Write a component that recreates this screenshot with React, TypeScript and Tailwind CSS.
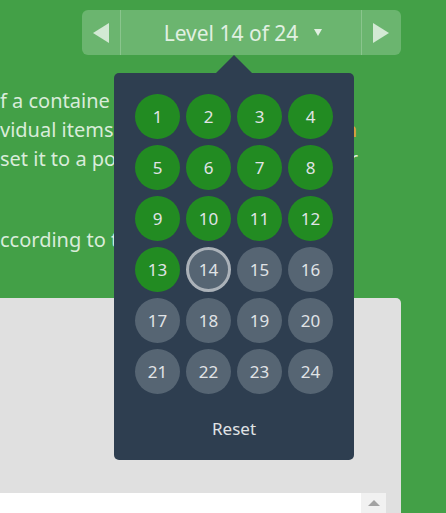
const LEVELS = Array.from({ length: 24 }, (_, i) => i + 1);
const CURRENT = 14;

function levelClass(level: number) {
  if (level < CURRENT) return "bg-[#228b22]";
  if (level === CURRENT) return "bg-[#566573] border-[3px] border-[#abb2b9]";
  return "bg-[#566573]";
}

function LevelMenu() {
  return (
    <div className="absolute top-[45px] left-8 z-10 flex w-60 flex-col items-center">
      <svg width="36" height="18" viewBox="0 0 36 18" aria-hidden="true">
        <path d="M0 18 18 0 36 18Z" fill="#2e3e50" />
      </svg>
      <div className="flex w-full flex-col items-center rounded-[5px] bg-[#2e3e50] pt-[21px] pb-4 text-[#e0e3e6]">
        <div className="grid grid-cols-4 gap-[6px]">
          {LEVELS.map((level) => (
            <button
              key={level}
              type="button"
              aria-current={level === CURRENT ? "step" : undefined}
              className={`flex size-[45px] items-center justify-center rounded-full text-[17px] leading-6 ${levelClass(level)}`}
            >
              {level}
            </button>
          ))}
        </div>
        <button type="button" className="mt-5 px-4 py-[3px] text-[17px] leading-6">
          Reset
        </button>
      </div>
    </div>
  );
}

function LevelBar() {
  return (
    <nav className="relative mr-[45px] ml-[82px] flex h-[45px] rounded-[6px] bg-[#6bb56f] text-[#e1f0e2]">
      <button type="button" aria-label="Previous level" className="flex w-[39px] items-center justify-end border-r border-[#8ac58d] pr-[11px]">
        <svg width="16" height="20" viewBox="0 0 16 20" aria-hidden="true">
          <path d="M0 10 16 0V20Z" fill="#d3e9d4" />
        </svg>
      </button>
      <button type="button" aria-expanded="true" className="flex flex-1 items-center justify-center gap-4 pl-1 text-[21px] leading-7 whitespace-nowrap">
        Level 14 of 24
        <svg width="8" height="7" viewBox="0 0 8 7" aria-hidden="true">
          <path d="M0 0H8L4 7Z" fill="#e1f0e2" />
        </svg>
      </button>
      <button type="button" aria-label="Next level" className="flex w-10 items-center border-l border-[#8ac58d] pl-[11px]">
        <svg width="16" height="20" viewBox="0 0 16 20" aria-hidden="true">
          <path d="M16 10 0 0V20Z" fill="#d3e9d4" />
        </svg>
      </button>
      <LevelMenu />
    </nav>
  );
}

export default function App() {
  return (
    <div className="flex h-screen flex-col overflow-hidden bg-[#43a047] pt-[10px] font-['Noto_Sans','Open_Sans',sans-serif]">
      <LevelBar />
      <div className="mt-[31px] mr-[88px] text-[20px] leading-[29px] whitespace-nowrap text-[#d9ecda]">
        <p>f a containe</p>
        <p className="flex justify-between">
          <span>vidual items</span>
          <code className="mr-px font-[inherit] text-[#e0a03c]">n</code>
        </p>
        <p className="flex justify-between">
          <span>set it to a po</span>
          <span>r</span>
        </p>
        <p className="mt-[52px]">ccording to t</p>
      </div>
      <section className="mt-[44px] mr-[45px] flex flex-1 flex-col rounded-tr-[5px] bg-[#e0e0e0] pt-[195px]">
        <div className="mr-[15px] flex flex-1 bg-white">
          <div className="flex-1" />
          <button type="button" aria-label="Scroll up" className="flex w-[25px] items-start justify-center bg-[#f1f1f1] pt-[7px]">
            <svg width="12" height="6" viewBox="0 0 12 6" aria-hidden="true">
              <path d="M0 6 6 0 12 6Z" fill="#a3a3a3" />
            </svg>
          </button>
        </div>
      </section>
    </div>
  );
}
